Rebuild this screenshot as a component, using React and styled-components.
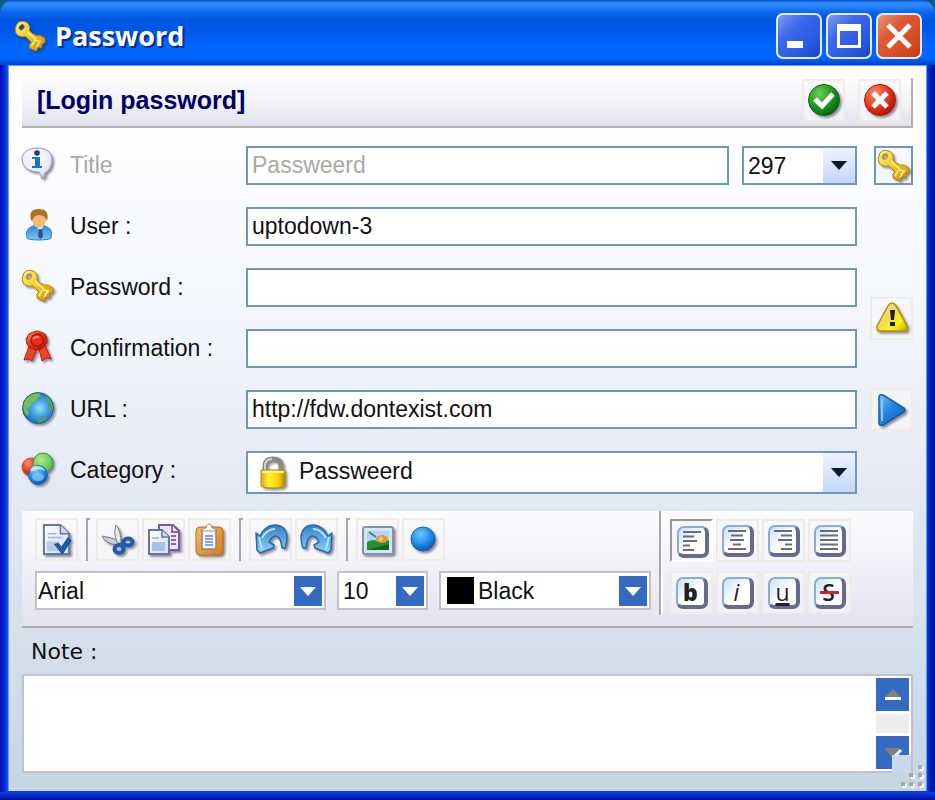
import React, { useState } from 'react';
import styled, { createGlobalStyle, css } from 'styled-components';

const GlobalStyle = createGlobalStyle`
  *, *::before, *::after {
    box-sizing: border-box;
  }

  body {
    margin: 0;
    background: #0b5a8e;
    color: #111;
    font-family: "Liberation Sans", Arial, sans-serif;
    font-size: 23px;
    line-height: 28px;
  }

  button, input, select, textarea {
    font: inherit;
    color: inherit;
    margin: 0;
  }
`

const Window = styled.div`
  display: flex;
  flex-direction: column;
  min-height: 100vh;
  padding: 0 8px 9px;
  border-radius: 16px 16px 0 0;
  background:
    linear-gradient(to top, #00129c, #0a2fd0 5px, #0b40d8 8px, transparent 8px),
    linear-gradient(to right, #0010b8, #0624d2 4px, #1a55e0 8px, transparent 8px),
    linear-gradient(to left, #000c98, #0020b8 5px, #0a3ddc 8px, #0a3ddc);
`

const TitleBar = styled.header`
  display: flex;
  align-items: center;
  gap: 9px;
  height: 65px;
  margin: 0 -8px;
  padding: 7px 13px 0 15px;
  border-radius: 14px 14px 0 0;
  background: linear-gradient(
    #0a50cc 0, #2f8cfc 3px, #2a86fa 6px, #0c66ee 12px, #0055e0 20px,
    #0058ea 32px, #0066ff 46px, #0066ff 58px, #0050e0 62px, #0040c8 65px
  );
`

const TitleText = styled.h1`
  flex: 1;
  margin: 0;
  color: #fff;
  font-family: "Open Sans", sans-serif;
  font-size: 27px;
  line-height: 32px;
  font-weight: 700;
  text-shadow: 2px 2px 1px #0a2a8c;
`

const CaptionButtons = styled.div`
  display: flex;
  gap: 4px;
`

const CaptionButton = styled.button`
  display: grid;
  place-items: center;
  width: 46px;
  height: 46px;
  padding: 0;
  border: 2px solid #e4ecfc;
  border-radius: 7px;
  background: ${({ $close }) => $close
    ? 'linear-gradient(135deg, #e8967c 0, #dc5a34 35%, #d84c24 70%, #c03a14 100%)'
    : 'linear-gradient(135deg, #7c9cf4 0, #3c68e8 35%, #2a5ae6 70%, #1844c4 100%)'};
`

const Client = styled.main`
  flex: 1;
  display: flex;
  flex-direction: column;
  padding: 12px 13px 18px;
  border: solid #5c9cf4;
  border-width: 1px 1px 0;
  background: linear-gradient(#fff 0, #fdfdff 90px, #f1f5fb 270px, #e4e9f4 420px, #d5dfec 580px, #c4d5e4 100%);
`

const Banner = styled.div`
  display: flex;
  align-items: center;
  gap: 13px;
  height: 50px;
  padding: 0 10px 4px 15px;
  border: solid #b4b2b0;
  border-width: 0 2px 2px 0;
  background: linear-gradient(#fefefe, #f2f2f8 50%, #e2e2ee);
`

const BannerTitle = styled.h2`
  flex: 1;
  margin: 0;
  color: #00006a;
  font-size: 25px;
  line-height: 28px;
  font-weight: 700;
`

const ToolButton = styled.button`
  display: grid;
  place-items: center;
  flex: none;
  width: 43px;
  height: 43px;
  padding: 0;
  border: 2px solid #efece6;
  background: rgba(246, 246, 250, .6);

  ${({ $pressed }) => $pressed && css`
    border-color: #9a9894 #fff #fff #9a9894;
    background: #f6f6fa;
    padding: 3px 0 0 3px;
  `}
`

const Form = styled.form`
  display: grid;
  grid-template-columns: 32px 160px 1fr 43px;
  grid-template-rows: repeat(5, 39px) 43px;
  column-gap: 16px;
  row-gap: 22px;
  align-items: start;
  margin-top: 18px;
`

const RowIcon = styled.span`
  padding-top: 2px;
`

const Label = styled.label`
  line-height: 38px;
  color: ${({ $disabled }) => $disabled ? '#aaa9a4' : '#111'};
`

const TitleFields = styled.div`
  display: grid;
  grid-template-columns: 1fr 115px;
  gap: 13px;
`

const Fields = styled.div`
  margin-right: -3px;
`

const Input = styled.input`
  display: block;
  width: 100%;
  height: 39px;
  padding: 0 4px;
  border: 2px solid #6f97b6;
  border-radius: 0;
  background: #fff;

  &:disabled {
    color: #aaa9a4;
  }
`

const SideCell = styled.div`
  grid-column: 4;
  grid-row: ${({ $row }) => $row};
  align-self: center;
  display: flex;
  justify-content: flex-end;
`

const KeyButton = styled.button`
  display: grid;
  place-items: center;
  width: 39px;
  height: 39px;
  padding: 0;
  border: 2px solid #6f97b6;
  background: #f6f8fc;
`

const SelectBox = styled.div`
  position: relative;
  height: ${({ $height }) => $height || '39px'};
`

const Select = styled.select`
  display: block;
  appearance: none;
  width: 100%;
  height: 100%;
  padding: 0 36px ${({ $lift }) => $lift || '0'} ${({ $indent }) => $indent || '4px'};
  border: 2px solid ${({ $flat }) => $flat ? '#c2c2c6' : '#6f97b6'};
  border-radius: 0;
  background: #fff;
`

const SelectArrow = styled.span`
  position: absolute;
  top: ${({ $flat }) => $flat ? '5px' : '2px'};
  bottom: ${({ $flat }) => $flat ? '4px' : '2px'};
  right: ${({ $flat }) => $flat ? '4px' : '2px'};
  width: ${({ $flat }) => $flat ? '28px' : '32px'};
  display: grid;
  place-items: center;
  color: ${({ $flat }) => $flat ? '#fff' : '#0a1830'};
  background: ${({ $flat }) => $flat ? '#356ac2' : 'linear-gradient(#eef3fe, #c3d7fb)'};
  pointer-events: none;
`

const SelectAdornment = styled.span`
  position: absolute;
  top: 0;
  bottom: 0;
  left: ${({ $left }) => $left};
  display: grid;
  place-items: center;
  pointer-events: none;
`

const Swatch = styled.span`
  width: 27px;
  height: 27px;
  background: #000;
`

const Toolbar = styled.div`
  display: flex;
  height: 117px;
  margin-top: 17px;
  border-bottom: 2px solid #b0b0b2;
  background: linear-gradient(#fcfcfe, #f0f0f8 50%, #e3e3f0);
`

const ToolbarLeft = styled.div`
  flex: 1;
  display: flex;
  flex-direction: column;
  gap: 10px;
  padding: 7px 8px 0 13px;
`

const ToolbarRight = styled.div`
  display: flex;
  flex-direction: column;
  gap: 9px;
  width: 254px;
  height: 104px;
  padding: 8px 0 0 9px;
  border-left: 2px solid #aaa8aa;
  box-shadow: inset 2px 0 #fafafc;
`

const ButtonRow = styled.div`
  display: flex;
  gap: 3px;
`

const Separator = styled.span`
  width: 4px;
  height: 43px;
  margin: 0 3px 0 5px;
  border: solid #a8a6a6;
  border-width: 2px 0 0 2px;
`

const SelectRow = styled.div`
  display: grid;
  grid-template-columns: 1fr 91px 212px;
  gap: 11px;
`

const KeyCap = styled.span`
  position: relative;
  display: grid;
  place-items: center;
  width: 32px;
  height: 32px;
  border: 2px solid #8eacca;
  border-right: 4px solid #666a8c;
  border-bottom: 4px solid #666a8c;
  border-radius: 7px;
  background: linear-gradient(135deg, #c6e2fa, #fff 55%);
  color: #222;
  font-size: 23px;
  line-height: 24px;
  font-family: "Open Sans", sans-serif;
  font-weight: ${({ $bold }) => $bold ? 800 : 400};
  font-style: ${({ $italic }) => $italic ? 'italic' : 'normal'};
  text-decoration: ${({ $underline }) => $underline ? 'underline' : 'none'};
  text-decoration-thickness: 3px;

  ${({ $strike }) => $strike && css`
    font-weight: 600;

    &::after {
      content: '';
      position: absolute;
      top: 12px;
      left: 4px;
      right: 3px;
      height: 3px;
      background: #d02028;
    }
  `}
`

const NoteLabel = styled.label`
  margin: 10px 0 8px 9px;
  font-family: "DejaVu Sans", sans-serif;
  font-size: 22px;
`

const NoteBox = styled.div`
  position: relative;
  flex: 1;
  display: flex;
  min-height: 99px;
  border: 2px solid #c0c2c8;
  background: #fff;
`

const NoteArea = styled.textarea`
  flex: 1;
  min-width: 0;
  padding: 4px;
  border: 0;
  resize: none;
  overflow: hidden;
  background: transparent;
`

const ScrollBar = styled.div`
  display: flex;
  flex-direction: column;
  justify-content: space-between;
  gap: 3px;
  width: 36px;
  padding: 2px 2px 2px 1px;
`

const ScrollTrack = styled.div`
  flex: 1;
  background: #ededed;
`

const ScrollButton = styled.button`
  display: grid;
  place-items: center;
  height: 33px;
  padding: 0;
  border: 0;
  background: #356ac2;
`

const GripCorner = styled.span`
  position: absolute;
  right: 0;
  bottom: -2px;
  width: 19px;
  height: 18px;
  background: #c8d8ee;
`

const Grip = styled.span`
  position: absolute;
  right: -14px;
  bottom: -18px;
  line-height: 0;
`

// shared gradients, referenced by id from every icon
const Defs = () => (
  <svg width="0" height="0" style={{ position: 'absolute' }} aria-hidden="true">
    <defs>
      <linearGradient id="gold" x1="0" y1="0" x2="1" y2="1">
        <stop offset="0" stopColor="#fff08a" />
        <stop offset=".5" stopColor="#f2c81c" />
        <stop offset="1" stopColor="#c88a08" />
      </linearGradient>
      <linearGradient id="yellow" x1="0" y1="0" x2="1" y2="0">
        <stop offset="0" stopColor="#d8a808" />
        <stop offset=".3" stopColor="#ffee30" />
        <stop offset=".7" stopColor="#fcd800" />
        <stop offset="1" stopColor="#b88600" />
      </linearGradient>
      <linearGradient id="warn" x1="0" y1="0" x2="1" y2="1">
        <stop offset="0" stopColor="#f8ecb0" />
        <stop offset=".4" stopColor="#f0d860" />
        <stop offset=".7" stopColor="#fcf410" />
        <stop offset="1" stopColor="#c8a000" />
      </linearGradient>
      <radialGradient id="green" cx=".35" cy=".3" r=".75">
        <stop offset="0" stopColor="#6cd050" />
        <stop offset=".6" stopColor="#1c9420" />
        <stop offset="1" stopColor="#086010" />
      </radialGradient>
      <radialGradient id="lime" cx=".4" cy=".35" r=".7">
        <stop offset="0" stopColor="#b4f088" />
        <stop offset="1" stopColor="#4cb440" />
      </radialGradient>
      <radialGradient id="red" cx=".35" cy=".3" r=".75">
        <stop offset="0" stopColor="#ff9070" />
        <stop offset=".6" stopColor="#e4341c" />
        <stop offset="1" stopColor="#a81408" />
      </radialGradient>
      <radialGradient id="blue" cx=".4" cy=".3" r=".75">
        <stop offset="0" stopColor="#70c8ff" />
        <stop offset=".6" stopColor="#1c88e4" />
        <stop offset="1" stopColor="#0850a8" />
      </radialGradient>
      <linearGradient id="shirt" x1="0" y1="0" x2="0" y2="1">
        <stop offset="0" stopColor="#2c88d8" />
        <stop offset="1" stopColor="#7cc8f8" />
      </linearGradient>
      <radialGradient id="globe" cx=".55" cy=".5" r=".6">
        <stop offset="0" stopColor="#98dcff" />
        <stop offset=".5" stopColor="#3c98e4" />
        <stop offset="1" stopColor="#185898" />
      </radialGradient>
      <radialGradient id="bubble" cx=".45" cy=".35" r=".7">
        <stop offset="0" stopColor="#fff" />
        <stop offset=".7" stopColor="#e8e8fa" />
        <stop offset="1" stopColor="#a4a4cc" />
      </radialGradient>
      <linearGradient id="play" x1="0" y1="0" x2="1" y2="1">
        <stop offset="0" stopColor="#7cc0f8" />
        <stop offset=".45" stopColor="#2484e0" />
        <stop offset="1" stopColor="#0858b4" />
      </linearGradient>
      <linearGradient id="arrowBlue" x1="0" y1="0" x2="0" y2="1">
        <stop offset="0" stopColor="#3480c8" />
        <stop offset="1" stopColor="#8cd0fc" />
      </linearGradient>
      <linearGradient id="paper" x1="0" y1="0" x2="1" y2="1">
        <stop offset="0" stopColor="#fff" />
        <stop offset="1" stopColor="#d0dcf4" />
      </linearGradient>
      <linearGradient id="orange" x1="0" y1="0" x2="1" y2="1">
        <stop offset="0" stopColor="#f8b860" />
        <stop offset="1" stopColor="#d87c14" />
      </linearGradient>
    </defs>
  </svg>
)

const IconSvg = styled.svg`
  display: block;
  flex: none;
  overflow: visible;
  ${({ $shadow }) => $shadow && 'filter: drop-shadow(2px 2px 1px rgba(40, 40, 60, .5));'}
`

const Icon = ({ size = 32, shadow = true, children }) => (
  <IconSvg width={size} height={size} viewBox="0 0 32 32" $shadow={shadow} aria-hidden="true">
    {children}
  </IconSvg>
)

const KeyIcon = ({ size }) => (
  <Icon size={size}>
    <path
      fillRule="evenodd"
      fill="url(#gold)"
      stroke="#b08410"
      d="M2 3Q5-1 11 1Q16 3 15 10L18 13L22 15L26 15L31 18L31 22L28 24L27 28L24 27L22 31L15 28L15 24L17 22L11 16Q4 17 1 13Q-1 8 2 3ZM5 5Q3 7 5 9Q7 10 9 8Q10 6 9 4Q7 3 5 5Z"
    />
    <path d="M13 12L22 19M17 26L20 21M22 27L26 21M20 20L27 21" stroke="#fff09c" strokeWidth="1.5" fill="none" />
  </Icon>
)

const InfoIcon = () => (
  <Icon>
    <path d="M15 0C24 0 30 4 30 12C30 20 26 23 23 25Q24 28 20 31Q19 27 17 24C7 24 0 19 0 11C0 4 7 0 15 0Z" fill="url(#bubble)" stroke="#9898bc" />
    <circle cx="15" cy="5" r="2.8" fill="#1c3c88" />
    <path d="M10 9H18V18H20V20H10V18H13V11H10Z" fill="#1c70d0" />
  </Icon>
)

const UserIcon = () => (
  <Icon shadow={false}>
    <path d="M5 29Q3 20 9 18L13 16H21L25 18Q31 20 29 29Q27 31 17 31Q7 31 5 29Z" fill="url(#shirt)" stroke="#3880c0" />
    <path d="M14 17L18 22L22 17L20 15H15Z" fill="#e4f4ff" />
    <path d="M17 20H20L21 28L18 30L16 27Z" fill="#344c90" />
    <ellipse cx="17" cy="10" rx="7" ry="9" fill="#f6b878" />
    <path d="M9 11Q6 0 17 0Q28 0 25 12Q23 6 17 6Q12 6 10 12Z" fill="#a8741c" />
  </Icon>
)

const RibbonIcon = () => (
  <Icon>
    <path d="M7 15L2 29L7 28L10 30L15 18ZM17 18L20 30L24 27L29 28L23 14Z" fill="#e8442c" stroke="#c0200c" />
    <path d="M15 0L19 1L23 3L25 7L25 12L22 16L18 19H13L8 17L5 13L4 8L7 3L11 1Z" fill="url(#red)" stroke="#c8200c" />
    <circle cx="15" cy="9" r="6" fill="#e83018" stroke="#a81808" strokeWidth="1.5" />
    <path d="M11 8Q13 5 17 6" stroke="#ff8c70" strokeWidth="2" fill="none" />
  </Icon>
)

const GlobeIcon = () => (
  <Icon>
    <circle cx="16" cy="16" r="15.5" fill="url(#globe)" stroke="#286498" />
    <path d="M4 7Q9 1 17 1L19 4L15 6L14 9L10 11L8 15L5 16L7 21L5 24Q-2 16 4 7Z" fill="#74c050" />
    <path d="M24 4Q31 9 31 17L28 19L26 15L27 11L23 8Z" fill="#50a468" />
    <path d="M16 27L22 24L25 26Q21 31 15 30Z" fill="#4ca078" />
  </Icon>
)

const CategoryIcon = () => (
  <Icon>
    <circle cx="9" cy="14" r="9" fill="url(#red)" stroke="#c05030" />
    <circle cx="21" cy="10" r="10" fill="url(#lime)" stroke="#409038" />
    <circle cx="16" cy="22" r="9.5" fill="url(#blue)" stroke="#2468b0" />
    <path d="M8 18Q10 12 15 13Q21 13 23 18Q18 15 14 17Q11 19 8 18Z" fill="#d8ecf8" opacity=".8" />
    <ellipse cx="16" cy="24" rx="6" ry="4" fill="#8cc8f8" opacity=".7" />
  </Icon>
)

const CheckIcon = () => (
  <Icon>
    <circle cx="16" cy="16" r="15.5" fill="url(#green)" stroke="#0c6c14" />
    <path d="M7 15L14 22L25 10" stroke="#fff" strokeWidth="5" fill="none" />
  </Icon>
)

const CancelIcon = () => (
  <Icon>
    <circle cx="16" cy="16" r="15.5" fill="url(#red)" stroke="#b01c0c" />
    <path d="M9 9L23 23M23 9L9 23" stroke="#fff" strokeWidth="5" />
  </Icon>
)

const WarningIcon = () => (
  <Icon>
    <path d="M16 1Q18 1 20 4L31 24Q32 29 28 29H4Q0 29 1 24L12 4Q14 1 16 1Z" fill="url(#warn)" stroke="#b49010" strokeWidth="1.5" />
    <path d="M14 8H19L18 18H15ZM14 20H19V24H14Z" fill="#1c1c10" />
  </Icon>
)

const PlayIcon = () => (
  <Icon>
    <path d="M3 3Q3 0 7 1L28 14Q30 16 28 18L7 31Q3 32 3 29Z" fill="url(#play)" stroke="#1c5ca8" strokeWidth="1.5" />
    <path d="M6 5V27" stroke="#8cc8f8" strokeWidth="2" />
  </Icon>
)

const LockIcon = () => (
  <Icon>
    <path d="M8 15V9Q8 2 16 2Q24 2 24 9V15" stroke="#888" strokeWidth="5" fill="none" />
    <path d="M8 14V9Q8 2 15 2" stroke="#d4d4d4" strokeWidth="2" fill="none" />
    <path d="M4 13H28V28Q28 31 16 31Q4 31 4 28Z" fill="url(#yellow)" stroke="#b48c08" />
    <path d="M5 15H27" stroke="#fff69c" strokeWidth="2" />
  </Icon>
)

const ApplyIcon = () => (
  <Icon size={31}>
    <path d="M3 1H20L29 10V31H3Z" fill="url(#paper)" stroke="#60789c" strokeWidth="2" />
    <path d="M20 1V10H29" fill="#cfdcf0" stroke="#60789c" strokeWidth="1.5" />
    <path d="M7 10H16M7 14H22" stroke="#a8b4c8" strokeWidth="1.5" />
    <path d="M6 18H19V28H6Z" fill="#b8c8e8" />
    <path d="M14 21L18 20L21 24L28 14L31 17L22 31Z" fill="#1c5cb0" stroke="#184888" />
  </Icon>
)

const CutIcon = () => (
  <Icon>
    <path d="M0 12Q8 13 18 17L16 21Q3 20 0 12Z" fill="#c8ccd0" stroke="#788088" />
    <path d="M14 1Q19 6 19 20L15 18Q11 9 14 1Z" fill="#e4e6e8" stroke="#788088" />
    <g fill="#a8c8f0" stroke="#205cb0" strokeWidth="4">
      <ellipse cx="26" cy="18" rx="4.5" ry="3.5" />
      <ellipse cx="17" cy="25" rx="4.5" ry="4" />
    </g>
    <path d="M18 20L23 23" stroke="#205cb0" strokeWidth="5" />
  </Icon>
)

const CopyIcon = () => (
  <Icon>
    <path d="M11 1H25L31 7V26H11Z" fill="#ece6fa" stroke="#7858a4" strokeWidth="2" />
    <path d="M24 1V8H31M23 12H28M23 16H28M23 20H28" fill="none" stroke="#8868b0" strokeWidth="2" />
    <path d="M1 6H14L21 13V30H1Z" fill="url(#paper)" stroke="#60789c" strokeWidth="2" />
    <path d="M14 6V13H21" fill="#d4e0f4" stroke="#60789c" strokeWidth="1.5" />
    <path d="M4 14H11" stroke="#9cb0cc" strokeWidth="1.5" />
    <path d="M4 18H17V27H4Z" fill="#a8c0e8" />
  </Icon>
)

const PasteIcon = () => (
  <Icon>
    <rect x="2" y="3" width="27" height="28" rx="4" fill="url(#orange)" stroke="#b87020" />
    <path d="M8 6H22V25H8Z" fill="#f6f6fc" stroke="#80889c" strokeWidth="1.5" />
    <path d="M8 7Q9 4 12 4Q12 0 15 0Q18 0 18 4Q21 4 22 7Z" fill="#fff" stroke="#a0988c" />
    <path d="M11 12H19M11 15H19M11 18H19M11 21H19" stroke="#98a0c0" strokeWidth="2" />
  </Icon>
)

const UndoIcon = ({ flip }) => (
  <Icon>
    <g transform={flip ? 'translate(32 0) scale(-1 1)' : undefined}>
      <path
        d="M1 9L5 12Q10 2 19 1Q31 1 32 13Q32 19 30 24H27Q26 13 21 12Q17 12 14 18L19 21L18 24L5 29L2 26Z"
        fill="url(#arrowBlue)"
        stroke="#2868a8"
        strokeWidth="1.5"
        strokeLinejoin="round"
      />
      <path d="M7 14Q12 5 20 5M4 13L7 25" stroke="#b8e4ff" strokeWidth="2" fill="none" />
    </g>
  </Icon>
)

const PictureIcon = () => (
  <Icon>
    <rect x="1" y="3" width="30" height="27" rx="2" fill="#d8e4f0" stroke="#7898b0" strokeWidth="2" />
    <rect x="5" y="7" width="22" height="19" fill="#a4dcf4" />
    <path d="M5 18Q12 14 17 18L27 16V26H5Z" fill="#249030" />
    <path d="M5 26L27 20V26Z" fill="#0c6820" />
    <ellipse cx="20" cy="15" rx="6" ry="4" fill="#f0903c" />
    <circle cx="19" cy="15" r="2" fill="#ffd868" />
    <path d="M7 8L14 13" stroke="#687088" strokeWidth="2" fill="none" />
  </Icon>
)

const BallIcon = () => (
  <Icon>
    <circle cx="15" cy="15" r="12" fill="url(#blue)" stroke="#1860b0" />
  </Icon>
)

const DownArrow = () => (
  <svg width="16" height="9" viewBox="0 0 16 9" aria-hidden="true">
    <path d="M0 0H16L8 9Z" fill="currentColor" />
  </svg>
)

// line starts and ends of each alignment glyph
const ALIGN_LINES = {
  left: [[3, 21], [3, 14], [3, 17], [3, 10], [3, 14]],
  center: [[3, 21], [6, 18], [5, 19], [8, 16], [3, 21]],
  right: [[3, 21], [10, 21], [7, 21], [14, 21], [10, 21]],
  justify: [[3, 21], [3, 21], [3, 21], [3, 21], [3, 21]],
}

const AlignIcon = ({ type }) => (
  <KeyCap>
    <svg width="24" height="24" viewBox="0 0 24 24" aria-hidden="true">
      {ALIGN_LINES[type].map(([from, to], i) => (
        <path key={i} d={`M${from} ${3 + i * 4.5}H${to}`} stroke="#6c6c70" strokeWidth="2" />
      ))}
    </svg>
  </KeyCap>
)

const Dropdown = ({ id, label, value, flat, height, indent, lift, children }) => (
  <SelectBox $height={height}>
    <Select id={id} aria-label={label} $flat={flat} $indent={indent} $lift={lift} defaultValue={value}>
      <option>{value}</option>
    </Select>
    {children}
    <SelectArrow $flat={flat}><DownArrow /></SelectArrow>
  </SelectBox>
)

const App = () => {
  const [align, setAlign] = useState('left')

  return (
    <>
      <GlobalStyle />
      <Defs />
      <Window>
        <TitleBar>
          <KeyIcon size={31} />
          <TitleText>Password</TitleText>
          <CaptionButtons>
            <CaptionButton type="button" aria-label="Minimize">
              <svg width="32" height="32"><path d="M4 21H20V28H4Z" fill="#fff" /></svg>
            </CaptionButton>
            <CaptionButton type="button" aria-label="Maximize">
              <svg width="32" height="32">
                <path d="M4 4H28V28H4ZM7 11V25H25V11Z" fill="#fff" fillRule="evenodd" />
              </svg>
            </CaptionButton>
            <CaptionButton type="button" aria-label="Close" $close>
              <svg width="32" height="32">
                <path d="M5 5L27 27M27 5L5 27" stroke="#fff" strokeWidth="5" />
              </svg>
            </CaptionButton>
          </CaptionButtons>
        </TitleBar>

        <Client>
          <Banner>
            <BannerTitle>[Login password]</BannerTitle>
            <ToolButton type="submit" form="login" aria-label="Accept"><CheckIcon /></ToolButton>
            <ToolButton type="button" aria-label="Cancel"><CancelIcon /></ToolButton>
          </Banner>

          <Form id="login" onSubmit={e => e.preventDefault()}>
            <RowIcon><InfoIcon /></RowIcon>
            <Label htmlFor="title" $disabled>Title</Label>
            <Fields>
              <TitleFields>
                <Input id="title" defaultValue="Passweerd" disabled />
                <Dropdown label="Number" value="297" />
              </TitleFields>
            </Fields>
            <SideCell $row="1">
              <KeyButton type="button" aria-label="Generate"><KeyIcon /></KeyButton>
            </SideCell>

            <RowIcon><UserIcon /></RowIcon>
            <Label htmlFor="user">User :</Label>
            <Fields><Input id="user" defaultValue="uptodown-3" /></Fields>
            <SideCell $row="2" />

            <RowIcon><KeyIcon /></RowIcon>
            <Label htmlFor="password">Password :</Label>
            <Fields><Input id="password" type="password" /></Fields>
            <SideCell $row="3 / 5">
              <ToolButton type="button" aria-label="Password strength"><WarningIcon /></ToolButton>
            </SideCell>

            <RowIcon><RibbonIcon /></RowIcon>
            <Label htmlFor="confirmation">Confirmation :</Label>
            <Fields><Input id="confirmation" type="password" /></Fields>

            <RowIcon><GlobeIcon /></RowIcon>
            <Label htmlFor="url">URL :</Label>
            <Fields><Input id="url" defaultValue="http://fdw.dontexist.com" /></Fields>
            <SideCell $row="5">
              <ToolButton type="button" aria-label="Open URL"><PlayIcon /></ToolButton>
            </SideCell>

            <RowIcon><CategoryIcon /></RowIcon>
            <Label htmlFor="category">Category :</Label>
            <Fields>
              <Dropdown id="category" value="Passweerd" height="43px" indent="51px" lift="4px">
                <SelectAdornment $left="11px"><LockIcon /></SelectAdornment>
              </Dropdown>
            </Fields>
          </Form>

          <Toolbar>
            <ToolbarLeft>
              <ButtonRow>
                <ToolButton type="button" aria-label="Apply"><ApplyIcon /></ToolButton>
                <Separator />
                <ToolButton type="button" aria-label="Cut"><CutIcon /></ToolButton>
                <ToolButton type="button" aria-label="Copy"><CopyIcon /></ToolButton>
                <ToolButton type="button" aria-label="Paste"><PasteIcon /></ToolButton>
                <Separator />
                <ToolButton type="button" aria-label="Undo"><UndoIcon /></ToolButton>
                <ToolButton type="button" aria-label="Redo"><UndoIcon flip /></ToolButton>
                <Separator />
                <ToolButton type="button" aria-label="Insert picture"><PictureIcon /></ToolButton>
                <ToolButton type="button" aria-label="Insert bullet"><BallIcon /></ToolButton>
              </ButtonRow>
              <SelectRow>
                <Dropdown label="Font" value="Arial" flat indent="1px" />
                <Dropdown label="Size" value="10" flat />
                <Dropdown label="Color" value="Black" flat indent="37px">
                  <SelectAdornment $left="8px"><Swatch /></SelectAdornment>
                </Dropdown>
              </SelectRow>
            </ToolbarLeft>
            <ToolbarRight>
              <ButtonRow>
                {Object.keys(ALIGN_LINES).map(type => (
                  <ToolButton
                    key={type}
                    type="button"
                    aria-label={`Align ${type}`}
                    $pressed={align === type}
                    onClick={() => setAlign(type)}
                  >
                    <AlignIcon type={type} />
                  </ToolButton>
                ))}
              </ButtonRow>
              <ButtonRow>
                <ToolButton type="button" aria-label="Bold"><KeyCap $bold>b</KeyCap></ToolButton>
                <ToolButton type="button" aria-label="Italic"><KeyCap $italic>i</KeyCap></ToolButton>
                <ToolButton type="button" aria-label="Underline"><KeyCap $underline>u</KeyCap></ToolButton>
                <ToolButton type="button" aria-label="Strikethrough"><KeyCap $strike>S</KeyCap></ToolButton>
              </ButtonRow>
            </ToolbarRight>
          </Toolbar>

          <NoteLabel htmlFor="note">Note :</NoteLabel>
          <NoteBox>
            <NoteArea id="note" />
            <ScrollBar>
              <ScrollButton type="button" aria-label="Scroll up">
                <svg width="16" height="11"><path d="M8 0L16 8H0Z" fill="#808080" /><path d="M0 8H16V11H0Z" fill="#fff" /></svg>
              </ScrollButton>
              <ScrollTrack />
              <ScrollButton type="button" aria-label="Scroll down">
                <svg width="18" height="11"><path d="M0 1H16L8 10Z" fill="#808080" /><path d="M8 10L16 2L18 4L11 11Z" fill="#fff" /></svg>
              </ScrollButton>
            </ScrollBar>
            <GripCorner />
            <Grip>
              <svg width="26" height="26">
                {[[20, 3], [11, 11], [20, 11], [3, 20], [11, 20], [20, 20]].map(([x, y]) => (
                  <g key={`${x}-${y}`}>
                    <rect x={x + 1} y={y + 1} width="4" height="4" fill="#fff" />
                    <rect x={x - 1} y={y - 1} width="4" height="4" fill="#a8a8a0" />
                  </g>
                ))}
              </svg>
            </Grip>
          </NoteBox>
        </Client>
      </Window>
    </>
  )
}

export default App
